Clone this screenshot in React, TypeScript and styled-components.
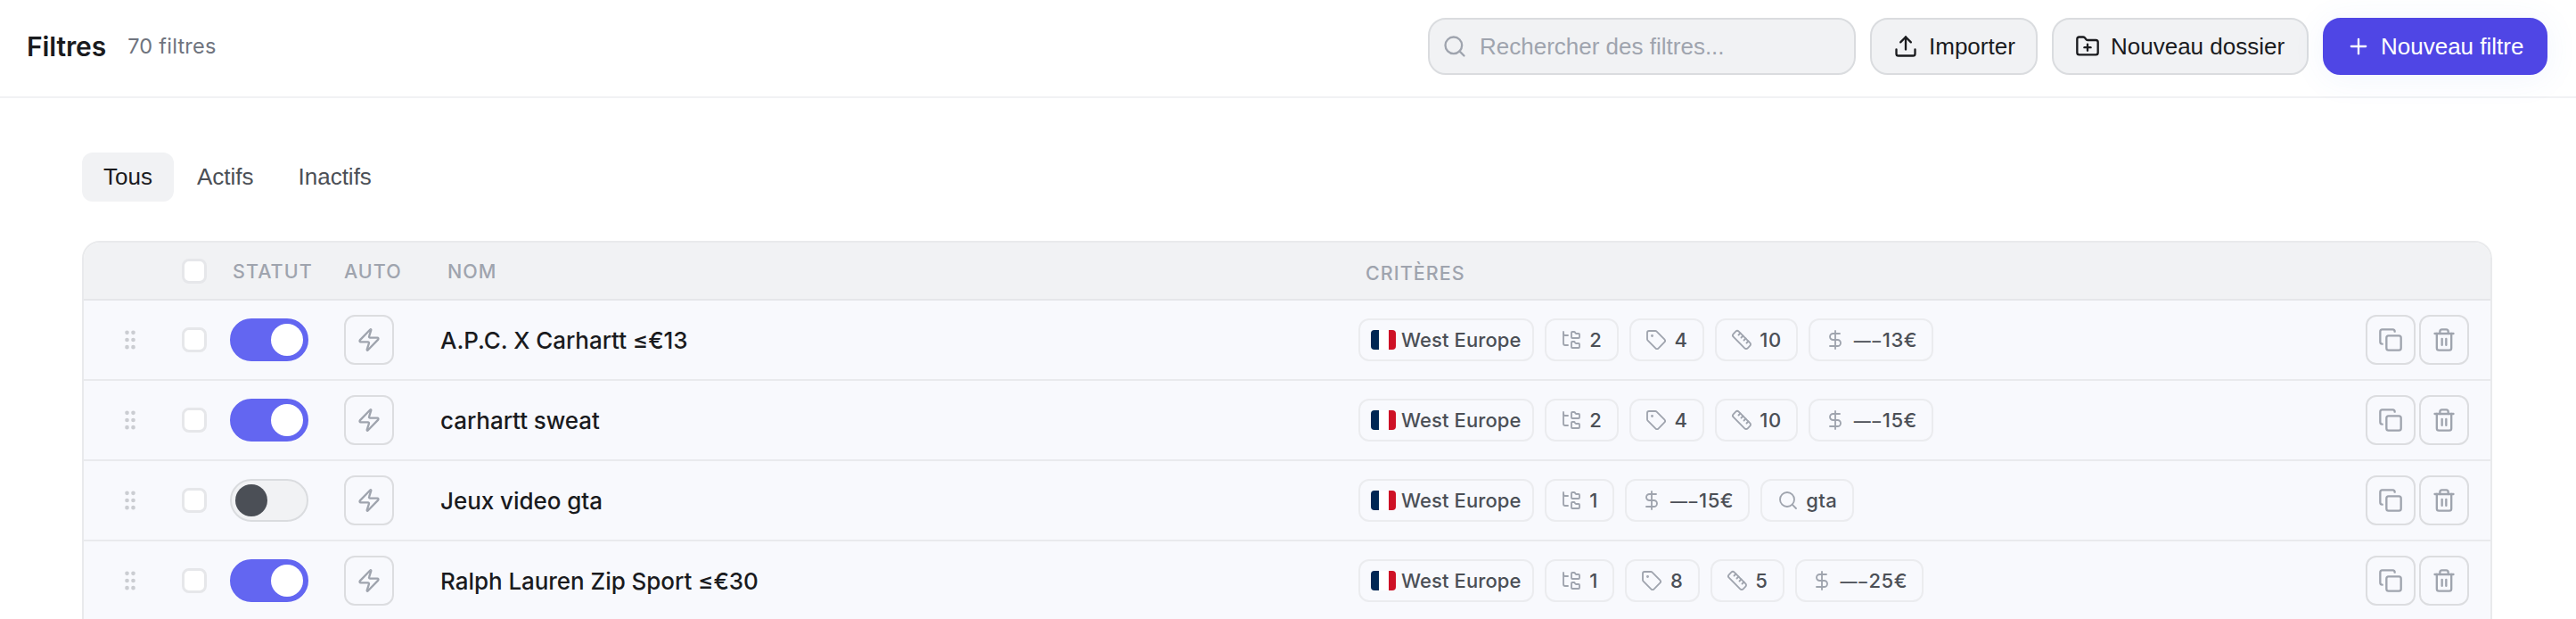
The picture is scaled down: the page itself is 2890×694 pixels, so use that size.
import React from "react";
import styled, { createGlobalStyle, css } from "styled-components";
import {
  Copy,
  DollarSign,
  FolderPlus,
  FolderTree,
  GripVertical,
  Plus,
  Ruler,
  Search,
  Tag,
  Trash2,
  Upload,
  Zap,
} from "lucide-react";

const GlobalStyle = createGlobalStyle`
  *, *::before, *::after { box-sizing: border-box; }
  html, body { margin: 0; background: #fff; overflow: hidden; }
  body { font-family: Inter, "Liberation Sans", sans-serif; color: #1a1b1e; }
  button, input { font: inherit; color: inherit; margin: 0; }
  svg { display: block; flex: none; }
`;

const Page = styled.div`
  height: 694px;
  overflow: hidden;
  background: #fff;
`;

const TopBar = styled.header`
  display: flex;
  align-items: center;
  justify-content: space-between;
  height: 110px;
  padding: 0 32px 4px 30px;
  border-bottom: 2px solid #f1f2f4;
`;

const Heading = styled.div`
  display: flex;
  align-items: center;
  gap: 24px;
`;

const Title = styled.h1`
  margin: 0;
  font-size: 30px;
  font-weight: 600;
  line-height: 40px;
  letter-spacing: -0.1px;
`;

const Count = styled.span`
  font-size: 23.5px;
  line-height: 36px;
  letter-spacing: 0.25px;
  color: #6f747e;
`;

const Tools = styled.div`
  display: flex;
  gap: 16px;
`;

const controlBox = css`
  display: flex;
  align-items: center;
  gap: 12px;
  height: 64px;
  border: 2px solid #dadcdf;
  border-radius: 20px;
  background: #f1f2f4;
  font-family: "Liberation Sans", Arial, sans-serif;
  font-size: 26px;
`;

const SearchBox = styled.label`
  ${controlBox}
  gap: 14px;
  width: 480px;
  padding: 0 14px;
  color: #9fa4ae;
`;

const SearchInput = styled.input`
  flex: 1;
  min-width: 0;
  border: 0;
  padding: 0;
  outline: 0;
  background: none;
  &::placeholder { color: #9fa4ae; opacity: 1; }
`;

const Button = styled.button<{ $primary?: boolean; $width: number }>`
  ${controlBox}
  width: ${(p) => p.$width}px;
  padding: 0 24px;
  white-space: nowrap;
  ${(p) =>
    p.$primary &&
    css`
      gap: 11px;
      color: #fff;
      background: #4f46e5;
      border-color: #4f46e5;
      box-shadow: 0 4px 36px rgba(79, 130, 229, 0.08);
    `}
`;

const Tabs = styled.nav`
  display: flex;
  gap: 2px;
  padding: 61px 92px 44px;
`;

const Tab = styled.button<{ $active?: boolean }>`
  height: 55px;
  padding: 0 24px;
  border: 0;
  border-radius: 12px;
  font-family: "Liberation Sans", Arial, sans-serif;
  font-size: 26px;
  color: ${(p) => (p.$active ? "#1a1b1e" : "#4b4f56")};
  background: ${(p) => (p.$active ? "#f1f2f4" : "transparent")};
`;

const Table = styled.section`
  margin: 0 94px 0 92px;
  border: 2px solid #e9eaec;
  border-radius: 20px 20px 0 0;
  overflow: hidden;
`;

const gridRow = css`
  display: grid;
  grid-template-columns: 104px 40px 136px 108px 1030px 1fr 140px;
  align-items: center;
`;

const HeadRow = styled.div`
  ${gridRow}
  height: 65px;
  background: #f1f2f4;
  border-bottom: 2px solid #e5e6e9;
`;

const Row = styled.div`
  ${gridRow}
  height: 90px;
  background: #f8f9fd;
  border-bottom: 2px solid #e9eaed;
`;

const Cell = styled.div<{ $pad?: number; $center?: boolean }>`
  display: flex;
  align-items: center;
  justify-content: ${(p) => (p.$center ? "center" : "flex-start")};
  padding-left: ${(p) => p.$pad ?? 0}px;
`;

const HeadLabel = styled.span<{ $drop?: number }>`
  font-size: 21.5px;
  font-weight: 500;
  line-height: 28px;
  letter-spacing: 1.05px;
  color: #9fa4ae;
  padding-top: ${(p) => p.$drop ?? 0}px;
`;

const Grip = styled(GripVertical)`
  color: #cbcdd2;
`;

const Checkbox = styled.span`
  width: 28px;
  height: 28px;
  border: 3px solid #e6e7ea;
  border-radius: 8px;
  background: #fff;
`;

const Switch = styled.span<{ $on: boolean }>`
  display: flex;
  align-items: center;
  justify-content: ${(p) => (p.$on ? "flex-end" : "flex-start")};
  width: 88px;
  height: 48px;
  padding: 0 4px;
  border: 2px solid ${(p) => (p.$on ? "#6366f1" : "#dadcdf")};
  border-radius: 24px;
  background: ${(p) => (p.$on ? "#6366f1" : "#f1f2f4")};
`;

const Thumb = styled.span<{ $on: boolean }>`
  width: 36px;
  height: 36px;
  border-radius: 50%;
  background: ${(p) => (p.$on ? "#fff" : "#4b4f56")};
`;

const IconButton = styled.button`
  display: flex;
  align-items: center;
  justify-content: center;
  width: 56px;
  height: 56px;
  padding: 0;
  border: 2px solid #dcdde0;
  border-radius: 12px;
  background: transparent;
  color: #9fa4ae;
`;

const Name = styled.span`
  font-size: 26px;
  font-weight: 500;
  line-height: 36px;
  letter-spacing: -0.05px;
  padding-top: 1px;
  white-space: nowrap;
`;

const Chips = styled.div`
  display: flex;
  gap: 12px;
  padding-left: 12px;
`;

const Chip = styled.span<{ $flag?: boolean }>`
  display: flex;
  align-items: center;
  gap: ${(p) => (p.$flag ? 6 : 8.5)}px;
  height: 48px;
  padding: 0 ${(p) => (p.$flag ? 12 : 16.25)}px;
  border: 2px solid #ebecef;
  border-radius: 12px;
  font-size: 22px;
  font-weight: 500;
  letter-spacing: ${(p) => (p.$flag ? 0.1 : 0.5)}px;
  color: #4b4f56;
  white-space: nowrap;
  svg { color: #9fa4ae; }
`;

const Dashes = styled.span`
  font-size: 19px;
  letter-spacing: 1.8px;
`;

const Flag = styled.span`
  width: 28px;
  height: 22px;
  border-radius: 4px;
  background: linear-gradient(90deg, #002654 0 33%, #fff 33% 71%, #ce1126 71%);
`;

const Actions = styled.div`
  display: flex;
  gap: 4px;
`;

type Criterion = { icon: React.ElementType; text: string; open?: boolean };
type Filter = { name: string; on: boolean; criteria: Criterion[] };

const filters: Filter[] = [
  {
    name: "A.P.C. X Carhartt ≤€13",
    on: true,
    criteria: [
      { icon: FolderTree, text: "2" },
      { icon: Tag, text: "4" },
      { icon: Ruler, text: "10" },
      { icon: DollarSign, text: "13€", open: true },
    ],
  },
  {
    name: "carhartt sweat",
    on: true,
    criteria: [
      { icon: FolderTree, text: "2" },
      { icon: Tag, text: "4" },
      { icon: Ruler, text: "10" },
      { icon: DollarSign, text: "15€", open: true },
    ],
  },
  {
    name: "Jeux video gta",
    on: false,
    criteria: [
      { icon: FolderTree, text: "1" },
      { icon: DollarSign, text: "15€", open: true },
      { icon: Search, text: "gta" },
    ],
  },
  {
    name: "Ralph Lauren Zip Sport ≤€30",
    on: true,
    criteria: [
      { icon: FolderTree, text: "1" },
      { icon: Tag, text: "8" },
      { icon: Ruler, text: "5" },
      { icon: DollarSign, text: "25€", open: true },
    ],
  },
];

export default function App() {
  return (
    <Page>
      <GlobalStyle />
      <TopBar>
        <Heading>
          <Title>Filtres</Title>
          <Count>70 filtres</Count>
        </Heading>
        <Tools>
          <SearchBox>
            <Search size={28} strokeWidth={2} />
            <SearchInput placeholder="Rechercher des filtres..." />
          </SearchBox>
          <Button $width={188}>
            <Upload size={28} strokeWidth={2} />
            Importer
          </Button>
          <Button $width={288}>
            <FolderPlus size={28} strokeWidth={2} />
            Nouveau dossier
          </Button>
          <Button $primary $width={252}>
            <Plus size={28} strokeWidth={2} />
            Nouveau filtre
          </Button>
        </Tools>
      </TopBar>

      <Tabs>
        <Tab $active>Tous</Tab>
        <Tab>Actifs</Tab>
        <Tab>Inactifs</Tab>
      </Tabs>

      <Table>
        <HeadRow>
          <Cell />
          <Cell $center><Checkbox /></Cell>
          <Cell $pad={23}><HeadLabel>STATUT</HeadLabel></Cell>
          <Cell $pad={12}><HeadLabel>AUTO</HeadLabel></Cell>
          <Cell $pad={20}><HeadLabel>NOM</HeadLabel></Cell>
          <Cell $pad={20}><HeadLabel $drop={4}>CRITÈRES</HeadLabel></Cell>
          <Cell />
        </HeadRow>
        {filters.map((f) => (
          <Row key={f.name}>
            <Cell $center><Grip size={28} /></Cell>
            <Cell $center><Checkbox /></Cell>
            <Cell $pad={20}>
              <Switch $on={f.on}><Thumb $on={f.on} /></Switch>
            </Cell>
            <Cell $pad={12}>
              <IconButton aria-label="Auto"><Zap size={28} strokeWidth={2} /></IconButton>
            </Cell>
            <Cell $pad={12}><Name>{f.name}</Name></Cell>
            <Chips>
              <Chip $flag><Flag />West Europe</Chip>
              {f.criteria.map(({ icon: Icon, text, open }, i) => (
                <Chip key={i}>
                  <Icon size={24} strokeWidth={1.85} />
                  <span>{open && <Dashes>—–</Dashes>}{text}</span>
                </Chip>
              ))}
            </Chips>
            <Actions>
              <IconButton aria-label="Dupliquer"><Copy size={28} strokeWidth={2} /></IconButton>
              <IconButton aria-label="Supprimer"><Trash2 size={28} strokeWidth={2} /></IconButton>
            </Actions>
          </Row>
        ))}
      </Table>
    </Page>
  );
}
